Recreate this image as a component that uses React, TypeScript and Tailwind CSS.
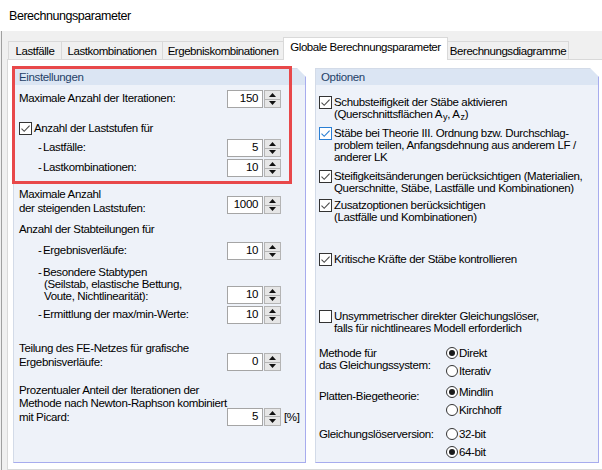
import React from "react"

function Spin({ value, className = "" }: { value: string; className?: string }) {
  return (
    <div className={`flex h-[18px] shrink-0 ${className}`}>
      <div className="flex h-full w-[36px] items-center justify-end border border-[#a5a5a5] bg-white pr-[4px] leading-none">
        {value}
      </div>
      <div className="ml-px flex h-full w-[17px] flex-col border border-[#b4b4b4] bg-[#e6e6e6]">
        <div className="flex flex-1 items-center justify-center border-b border-[#b4b4b4]">
          <svg width="7" height="4" viewBox="0 0 7 4">
            <path d="M3.5 0L7 4H0Z" fill="#111" />
          </svg>
        </div>
        <div className="flex flex-1 items-center justify-center">
          <svg width="7" height="4" viewBox="0 0 7 4">
            <path d="M0 0H7L3.5 4Z" fill="#111" />
          </svg>
        </div>
      </div>
    </div>
  )
}

function Check({ checked = false, blue = false }: { checked?: boolean; blue?: boolean }) {
  return (
    <span
      className={`flex h-[13px] w-[13px] shrink-0 items-center justify-center border bg-white ${
        blue ? "border-[#2a7fd4]" : "border-[#333333]"
      }`}
    >
      {checked && (
        <svg width="11" height="11" viewBox="0 0 11 11">
          <path d="M1.5 5.6L4.2 8.3L9.6 2.6" fill="none" stroke={blue ? "#2a7fd4" : "#4a4a4a"} strokeWidth="1.1" />
        </svg>
      )}
    </span>
  )
}

function Radio({ checked = false, label }: { checked?: boolean; label: string }) {
  return (
    <div className="flex h-[18px] items-center">
      <span className="flex h-[12px] w-[12px] items-center justify-center rounded-full border border-[#333333] bg-white">
        {checked && <span className="h-[6px] w-[6px] rounded-full bg-[#1a1a1a]" />}
      </span>
      <span className="pl-px">{label}</span>
    </div>
  )
}

function Dash({ children }: { children: React.ReactNode }) {
  return (
    <div className="flex flex-1 pl-[19px]">
      <span className="w-[5px] shrink-0">-</span>
      <span>{children}</span>
    </div>
  )
}

function Unit({ children }: { children?: React.ReactNode }) {
  return <span className="h-[18px] w-[21px] shrink-0 pl-[3px] leading-[18px]">{children}</span>
}

function GroupHeader({ title }: { title: string }) {
  return <div className="h-[16px] bg-[#dbe5f3] pl-[5px] leading-[16px] text-[#1f3f68]">{title}</div>
}

const groupCls =
  "flex h-[395px] shrink-0 flex-col border border-l-[#d3dbe8] border-t-[#d3dbe8] border-r-[#a7acee] border-b-[#a7acee] bg-[#eef2f9] [clip-path:polygon(0_0,calc(100%_-_9px)_0,100%_9px,100%_100%,0_100%)]"

export default function App() {
  const tabs = [
    { label: "Lastfälle", w: "w-[53px]" },
    { label: "Lastkombinationen", w: "w-[101px]" },
    { label: "Ergebniskombinationen", w: "w-[121px]" },
  ]

  return (
    <div className="relative flex h-[470px] w-[602px] flex-col overflow-hidden bg-[#f0f0f0] font-['Liberation_Sans',Arial,sans-serif] text-[11.5px] tracking-[-0.35px] text-black">
      {/* title bar */}
      <div className="h-[31px] shrink-0 bg-white pl-[9px] pt-[9px] text-[12.5px] leading-[14px] tracking-[-0.45px]">
        Berechnungsparameter
      </div>

      <div className="ml-px flex flex-1 flex-col border-l border-[#a0a0a0] pl-[5px]">
        {/* tabs */}
        <div className="mt-[6px] flex h-[22px] items-end pl-px tracking-[-0.45px]">
          {tabs.map((t) => (
            <div
              key={t.label}
              className={`${t.w} -mb-px flex h-[19px] items-center justify-center border-l border-t border-[#d9d9d9] bg-[#f0f0f0] pt-px`}
            >
              {t.label}
            </div>
          ))}
          <div className="relative z-10 -mb-px flex h-[23px] w-[165px] items-center justify-center border-x border-t border-[#d9d9d9] bg-white pb-[3px]">
            Globale Berechnungsparameter
          </div>
          <div className="-mb-px flex h-[19px] w-[121px] items-center justify-center border-r border-t border-[#d9d9d9] bg-[#f0f0f0] pt-px">
            Berechnungsdiagramme
          </div>
        </div>

        {/* tab panel */}
        <div className="flex w-[620px] flex-1 gap-[9px] border border-[#d9d9d9] bg-white pl-[5px] pt-[8px]">
          {/* Einstellungen */}
          <div className={`${groupCls} w-[293px]`}>
            <GroupHeader title="Einstellungen" />
            <div className="flex flex-col pl-[5px] pr-[3px]">
              <div className="mt-[5px] flex items-center">
                <span className="flex-1">Maximale Anzahl der Iterationen:</span>
                <Spin value="150" />
                <Unit />
              </div>

              <div className="mt-[14px] flex h-[13px] items-center gap-[2px]">
                <Check checked />
                <span>Anzahl der Laststufen für</span>
              </div>

              <div className="mt-[4px] flex items-center">
                <Dash>Lastfälle:</Dash>
                <Spin value="5" />
                <Unit />
              </div>
              <div className="mt-[2px] flex items-center">
                <Dash>Lastkombinationen:</Dash>
                <Spin value="10" />
                <Unit />
              </div>

              <div className="mt-[10px] flex items-end">
                <span className="flex-1 leading-[14px]">
                  Maximale Anzahl
                  <br />
                  der steigenden Laststufen:
                </span>
                <Spin value="1000" className="mb-px" />
                <Unit />
              </div>

              <div className="mt-[7px] leading-[14px]">Anzahl der Stabteilungen für</div>

              <div className="mt-[6px] flex items-center">
                <Dash>Ergebnisverläufe:</Dash>
                <Spin value="10" />
                <Unit />
              </div>

              <div className="mt-[6px] flex items-end">
                <div className="flex flex-1 pb-[2px] pl-[19px] leading-[12px]">
                  <span className="w-[5px] shrink-0">-</span>
                  <span>
                    Besondere Stabtypen
                    <br />
                    <span className="pl-px">(Seilstab, elastische Bettung,</span>
                    <br />
                    <span className="pl-px">Voute, Nichtlinearität):</span>
                  </span>
                </div>
                <Spin value="10" />
                <Unit />
              </div>

              <div className="mt-[2px] flex items-center">
                <Dash>Ermittlung der max/min-Werte:</Dash>
                <Spin value="10" />
                <Unit />
              </div>

              <div className="mt-[17px] flex items-end">
                <span className="flex-1 pb-[2px] leading-[14px]">
                  Teilung des FE-Netzes für grafische
                  <br />
                  Ergebnisverläufe:
                </span>
                <Spin value="0" />
                <Unit />
              </div>

              <div className="mt-[13px] flex items-end">
                <span className="flex-1 pb-[2px] leading-[13.3px]">
                  Prozentualer Anteil der Iterationen der
                  <br />
                  Methode nach Newton-Raphson kombiniert
                  <br />
                  mit Picard:
                </span>
                <Spin value="5" />
                <Unit>[%]</Unit>
              </div>
            </div>
          </div>

          {/* Optionen */}
          <div className={`${groupCls} w-[284px]`}>
            <GroupHeader title="Optionen" />
            <div className="flex flex-col pl-[3px] leading-[12px]">
              <div className="mt-[11px] flex items-start gap-[2px]">
                <Check checked />
                <span>
                  Schubsteifigkeit der Stäbe aktivieren
                  <br />
                  (Querschnittsflächen A
                  <span className="relative top-[2px] pl-px text-[9px]">y</span>, A
                  <span className="relative top-[2px] pl-px text-[9px]">z</span>)
                </span>
              </div>

              <div className="mt-[6px] flex items-start gap-[2px]">
                <Check checked blue />
                <span>
                  Stäbe bei Theorie III. Ordnung bzw. Durchschlag-
                  <br />
                  problem teilen, Anfangsdehnung aus anderem LF /
                  <br />
                  anderer LK
                </span>
              </div>

              <div className="mt-[7px] flex items-start gap-[2px]">
                <Check checked />
                <span>
                  Steifigkeitsänderungen berücksichtigen (Materialien,
                  <br />
                  Querschnitte, Stäbe, Lastfälle und Kombinationen)
                </span>
              </div>

              <div className="mt-[5px] flex items-start gap-[2px]">
                <Check checked />
                <span>
                  Zusatzoptionen berücksichtigen
                  <br />
                  (Lastfälle und Kombinationen)
                </span>
              </div>

              <div className="mt-[30px] flex items-start gap-[2px]">
                <Check checked />
                <span>Kritische Kräfte der Stäbe kontrollieren</span>
              </div>

              <div className="mt-[44px] flex items-start gap-[2px]">
                <Check />
                <span>
                  Unsymmetrischer direkter Gleichungslöser,
                  <br />
                  falls für nichtlineares Modell erforderlich
                </span>
              </div>

              <div className="mt-[10px] flex">
                <span className="w-[127px] shrink-0 pt-[3px] leading-[12.3px]">
                  Methode für
                  <br />
                  das Gleichungssystem:
                </span>
                <div className="flex flex-col">
                  <Radio checked label="Direkt" />
                  <Radio label="Iterativ" />
                </div>
              </div>

              <div className="mt-[3px] flex">
                <span className="w-[127px] shrink-0 pt-[7px]">Platten-Biegetheorie:</span>
                <div className="flex flex-col">
                  <Radio checked label="Mindlin" />
                  <Radio label="Kirchhoff" />
                </div>
              </div>

              <div className="mt-[6px] flex">
                <span className="w-[127px] shrink-0 pt-[3px]">Gleichungslöserversion:</span>
                <div className="flex flex-col">
                  <Radio label="32-bit" />
                  <Radio checked label="64-bit" />
                </div>
              </div>
            </div>
          </div>
        </div>
      </div>

      {/* red highlight frame */}
      <div className="pointer-events-none absolute left-[12px] top-[66px] h-[118px] w-[280px] border-[3px] border-[#e8484a]" />
    </div>
  )
}
